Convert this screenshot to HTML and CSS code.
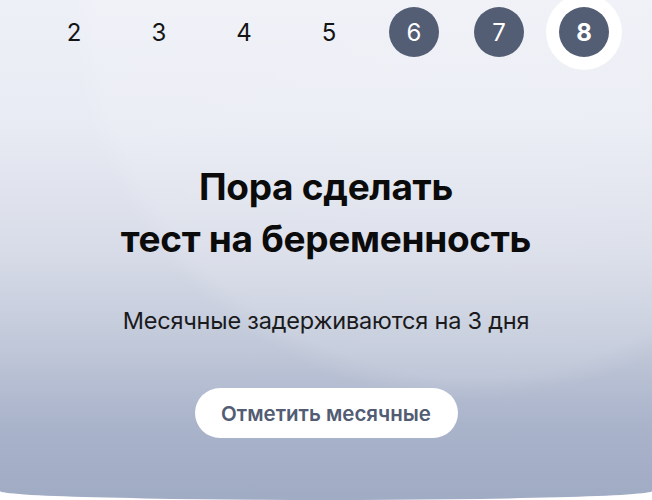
FILE: index.html
```html
<!DOCTYPE html>
<html lang="ru">
<head>
<meta charset="utf-8">
<link rel="stylesheet" href="styles.css">
</head>
<body>
<div class="screen">
  <div class="days">
    <div class="day">2</div>
    <div class="day">3</div>
    <div class="day">4</div>
    <div class="day">5</div>
    <div class="day filled">6</div>
    <div class="day filled">7</div>
    <div class="day filled current">8</div>
  </div>
  <h1 class="title">Пора сделать<br>тест на беременность</h1>
  <p class="subtitle">Месячные задерживаются на 3 дня</p>
  <button class="action">Отметить месячные</button>
</div>
</body>
</html>
```

FILE: styles.css
```css
html, body {
  margin: 0;
  padding: 0;
  background: #ffffff;
}
body {
  width: 652px;
  height: 500px;
  overflow: hidden;
  font-family: Inter, "Noto Sans", sans-serif;
}
.screen {
  width: 652px;
  height: 500px;
  box-sizing: border-box;
  display: flex;
  flex-direction: column;
  align-items: center;
  border-radius: 0 0 50% 50% / 0 0 9px 9px;
  background:
    radial-gradient(circle 400px at 470px 0px, rgba(255,255,255,0.16) 0, rgba(255,255,255,0.12) 94%, rgba(255,255,255,0) 100%),
    linear-gradient(180deg, #eef0f7 0%, #e8ebf3 25%, #d8dce8 50%, #bfc7d8 70%, #a9b3ca 85%, #a0abc4 100%);
}
.days {
  align-self: stretch;
  display: flex;
  gap: 35px;
  padding: 7px 0 0 49px;
}
.day {
  width: 50px;
  height: 50px;
  border-radius: 50%;
  display: flex;
  align-items: center;
  justify-content: center;
  font-size: 24px;
  color: #141414;
}
.day.filled {
  background: #535d74;
  color: #ffffff;
}
.day.current {
  font-weight: 700;
  box-shadow: 0 0 0 13px #ffffff;
}
.title {
  margin: 104px 0 0;
  font-size: 37px;
  line-height: 52px;
  font-weight: 700;
  text-align: center;
  color: #0b0b0c;
  letter-spacing: -0.3px;
}
.subtitle {
  margin: 41px 0 0;
  font-size: 23.5px;
  line-height: 30px;
  color: #1a1a1c;
  letter-spacing: -0.2px;
}
.action {
  margin-top: 52px;
  width: 263px;
  height: 50px;
  border: none;
  border-radius: 25px;
  background: #ffffff;
  font-family: Inter, "Noto Sans", sans-serif;
  font-size: 20.5px;
  font-weight: 600;
  color: #525c73;
  padding: 0;
}
```
